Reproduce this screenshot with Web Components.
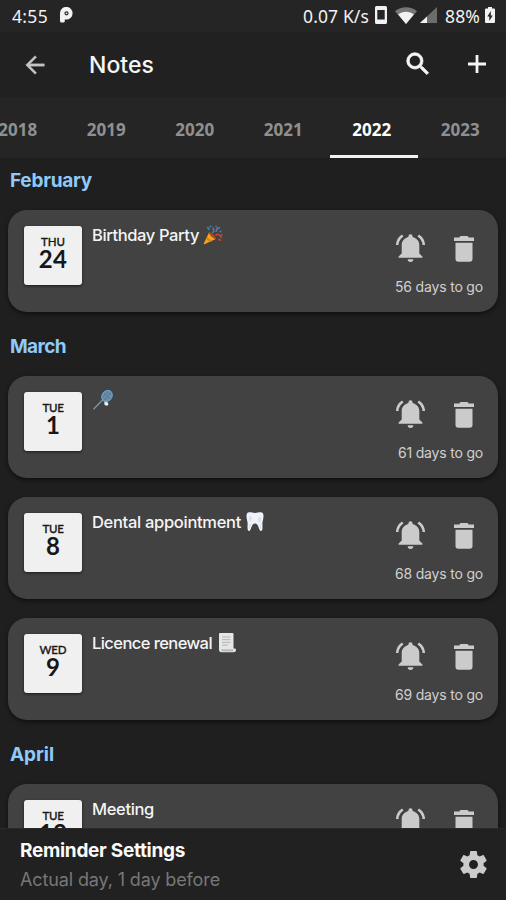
<!DOCTYPE html>
<html lang="en"><head><meta charset="utf-8"><title>Notes</title>
<style>html,body{margin:0;background:#212121;height:900px;overflow:hidden}</style></head>
<body><notes-app></notes-app>
<script>
const icons = {
 back:['0 0 24 24','<path d="M20 11H7.83l5.59-5.59L12 4l-8 8 8 8 1.41-1.41L7.83 13H20v-2z" stroke="currentColor" stroke-width=".3"/>'],
 search:['0 0 24 24','<path stroke="currentColor" stroke-width=".6" d="M15.5 14h-.79l-.28-.27A6.47 6.47 0 0 0 16 9.5 6.5 6.5 0 1 0 9.5 16c1.61 0 3.09-.59 4.23-1.57l.27.28v.79l5 4.99L20.49 19l-4.99-5zm-6 0a4.5 4.5 0 1 1 0-9 4.5 4.5 0 0 1 0 9z"/>'],
 plus:['0 0 18 18','<path d="M7.6 0h2.8v7.6H18v2.8h-7.6V18H7.6v-7.6H0V7.6h7.6z"/>'],
 bell:['0 0 28 28','<path d="M14 .2a2 2 0 0 0-2 2v.7C8 3.9 5.500 7 5.500 11v8.500L2.500 22.400v1.300h23v-1.300l-3-2.900V11c0-4-2.500-7.100-6.500-8.100v-.7a2 2 0 0 0-2-2zM11.300 25.200a2.700 2.700 0 0 0 5.400 0z"/><path fill="none" stroke="currentColor" stroke-width="2.500" d="M6.500 1.600C3.200 4 1.300 7 1.200 11M21.500 1.600c3.300 2.400 5.200 5.400 5.300 9.400"/>'],
 trash:['0 0 20 26','<path d="M6.500 0h7l1.300 1.600H20v3.500H0V1.600h5.200zM1.500 6.700h17V23a2.700 2.700 0 0 1-2.700 2.700H4.200A2.700 2.700 0 0 1 1.500 23z"/>'],
 gear:['2 2 20 20','<path d="M19.430 12.980c.04-.32.07-.64.07-.98s-.03-.66-.07-.98l2.110-1.650c.19-.15.24-.42.12-.64l-2-3.460c-.12-.22-.39-.3-.61-.22l-2.490 1c-.52-.4-1.080-.73-1.690-.98l-.38-2.650C14.460 2.180 14.250 2 14 2h-4c-.25 0-.46.18-.49.42l-.38 2.650c-.61.25-1.170.59-1.690.98l-2.490-1c-.23-.09-.49 0-.61.22l-2 3.460c-.13.22-.07.49.12.64l2.110 1.650c-.04.32-.07.65-.07.98s.03.66.07.98l-2.110 1.650c-.19.15-.24.42-.12.64l2 3.460c.12.22.39.3.61.22l2.490-1c.52.4 1.080.73 1.690.98l.38 2.650c.03.24.24.42.49.42h4c.25 0 .46-.18.49-.42l.38-2.650c.61-.25 1.170-.59 1.690-.98l2.490 1c.23.09.49 0 .61-.22l2-3.460c.12-.22.07-.49-.12-.64zM12 15.300a3.300 3.300 0 1 1 0-6.600 3.300 3.300 0 0 1 0 6.600z"/>'],
 parking:['0 0 13 16','<path fill-rule="evenodd" d="M0 6.300A6.300 6.300 0 1 1 6.300 12.500H4.800V14a1.500 1.500 0 0 1-1.500 1.500H1.500A1.500 1.500 0 0 1 0 14zM6.500 4.200a2.100 2.100 0 1 0 0 4.200 2.100 2.100 0 0 0 0-4.200z"/><circle cx="6.500" cy="6.300" r=".9"/>'],
 phone:['0 0 12 18','<path fill-rule="evenodd" d="M1.500 0h9Q12 0 12 1.500v15q0 1.500-1.500 1.500h-9Q0 18 0 16.500v-15Q0 0 1.500 0zM2.300 3.900v9.700h7.400V3.900z"/>'],
 wifi:['0 0 22 17','<path opacity=".4" d="M0 4.200C6-1.100 16-1.100 22 4.200L11 17z"/><path d="M3.200 7.500C7.500 3.900 14.500 3.900 18.800 7.500L11 17z"/>'],
 signal:['0 0 17 16','<path opacity=".35" d="M17 0v16H0z"/><path d="M7 9.400V16H0z"/>'],
 battery:['0 0 10 16','<path fill-rule="evenodd" d="M3 0h4v1.500h2q1 0 1 1V15q0 1-1 1H1q-1 0-1-1V2.500q0-1 1-1h2zM5.800 4L2.300 9.500h2V14l3.400-5.600H5.800z"/>'],
 party:['0 0 20 20','<path fill="#f9a51b" d="M6 7.500L.8 18.600q-.3 1 .7.700L12.800 14z"/><path fill="#d98218" d="M4 12l5 4-2 1-4-3z"/><path fill="#b7471d" d="M6 7.500c1-1 7.500 4.200 6.900 6.500-1.500.8-7.500-4.500-6.900-6.500z"/><g fill="none" stroke-width="1.500"><path stroke="#3d87bd" d="M9.500 8q2.500-3 .2-5.500M4 2.500q2 .2 2 2.500M13 7q.2-3.500 4-4.500"/><path stroke="#d44434" d="M12.500 10.500q2-2 3.500-.5t3.500-.8M13.500 4.500l1-2.500M15 14.500l3 .8"/></g><g fill="#3d87bd"><circle cx="7.500" cy="1.500" r="1"/><circle cx="17.500" cy="6.500" r="1"/><circle cx="13" cy="1.200" r=".8"/></g><circle cx="18" cy="12" r="1" fill="#d44434"/>'],
 racket:['0 0 20 20','<path stroke="#7898aa" stroke-width="1.300" d="M.5 19.300L9.500 10"/><ellipse cx="14" cy="6" rx="4.800" ry="5.800" transform="rotate(38 14 6)" fill="#587f9c" stroke="#5fa6cf" stroke-width="1.300"/><path stroke="#9b9fa9" stroke-width=".5" d="M10 5l6 5M12 2l6 5M10 9l6-7M13 11l5-6"/><path fill="#e9eef0" d="M11.500 11.500l3.500 1 .3 2.500q-2 1.500-4-.5z"/>'],
 tooth:['0 0 18 20','<path fill="#f0f2fb" d="M1 1.500C3-.8 5.500 1 9 1s6-1.800 8 .5c1.400 2.500-.4 7-.6 9.500-.1 3 .8 8-1.500 8-2.200 0-2-7.500-5.900-7.500S5.300 19 3.100 19C.8 19 1.700 14 1.600 11 1.400 8.500-.4 4 1 1.500z"/><path fill="#d9ddf1" d="M3 5q2-2 3 1l-1 4q-2-1-2-5zM12 6q2-2 3 0l-1 5q-2-1-2-5zM3 12l2 0-2 6zM13 12l2 1 0 5z"/>'],
 scroll:['0 0 18 20','<path fill="#e5e6e7" d="M1 1q0-1 1-1h12.500q1 0 1 1v14.500H17q1 0 1 1.500 0 2.200-2.500 2.200H3.500Q1 19.200 1 16.500z"/><path fill="#b9bbbd" d="M3 16.200h12.500q-1 1.200.5 2.300H4.500Q3 18 3 16.200z"/><path stroke="#b0b2b5" stroke-width="1" d="M4 4h8.500M4 6.700h8.500M4 9.400h8.500M4 12.100h6"/>']
};
const define = (name, html, after) => {
 const t = document.createElement('template');
 customElements.define(name, class extends HTMLElement {
  connectedCallback(){
   if (this.shadowRoot) return;
   t.innerHTML = typeof html === 'function' ? html(this) : html;
   this.attachShadow({mode:'open'}).append(t.content.cloneNode(true));
   if (after) after(this);
  }
 });
};
define('x-icon', e => {
 const [box, body] = icons[e.getAttribute('name')];
 return `<style>:host{display:block;flex:none}svg{display:block;fill:currentColor}</style><svg width="${e.getAttribute('w')}" height="${e.getAttribute('h')}" viewBox="${box}" preserveAspectRatio="none">${body}</svg>`;
});
/* Text tracked so that the run takes exactly the width given by "w". */
define('fit-text', '<style>:host{display:block;flex:none;white-space:nowrap}span{display:inline-block}</style><span><slot></slot></span>', e => {
 const s = e.shadowRoot.querySelector('span'), w = +e.getAttribute('w');
 e.style.width = w + 'px';
 s.style.letterSpacing = (w - s.getBoundingClientRect().width) / e.textContent.length + 'px';
});
define('status-bar', `<style>:host{display:flex;height:32px;align-items:center;padding:0 11px 0 12px;background:#252525;color:#f2f2f2;font:17.500px/32px "Noto Sans",sans-serif;flex:none}
 .sp{flex:1}x-icon{margin-top:-2px}</style>
 <fit-text w="36">4:55</fit-text><x-icon name="parking" w="13" h="16" style="margin-left:12px"></x-icon><div class="sp"></div>
 <fit-text w="66">0.07 K/s</fit-text><x-icon name="phone" w="12" h="18" style="margin-left:6px"></x-icon><x-icon name="wifi" w="22" h="17" style="margin-left:8px"></x-icon><x-icon name="signal" w="17" h="16" style="margin-left:3px"></x-icon><fit-text w="35" style="margin-left:8px">88%</fit-text><x-icon name="battery" w="10" h="16" style="margin-left:5px"></x-icon>`);
define('app-bar', `<style>:host{display:flex;height:65px;align-items:center;background:#212121;color:#f5f5f5;flex:none;padding:0 20px 0 21px;box-sizing:border-box;font:500 23px/65px Inter,sans-serif}
 .sp{flex:1}</style><x-icon name="back" w="28" h="28" style="color:#c4c4c4"></x-icon><fit-text w="65" style="margin:2px 0 0 40px">Notes</fit-text><div class="sp"></div><x-icon name="search" w="30" h="30" style="margin:-1px 35px 0 0"></x-icon><x-icon name="plus" w="18" h="18" style="margin-top:-1px"></x-icon>`);
define('year-tab', `<style>:host{display:flex;flex:none;width:88.500px;height:61px;justify-content:center;color:#909090;box-sizing:border-box;border-bottom:3px solid transparent;padding-top:3px}
 :host([active]){color:#fff;border-color:#f2f2f2}</style><fit-text w="43"><slot></slot></fit-text>`);
define('year-tabs', `<style>:host{display:flex;height:61px;background:#252525;flex:none;overflow:hidden;font:700 17px/59px "Noto Sans",sans-serif}
 year-tab:first-of-type{margin-left:-24.500px}</style>${[2018,2019,2020,2021,2022,2023].map(y=>`<year-tab${y===2022?' active':''}>${y}</year-tab>`).join('')}`);
define('month-title', `<style>:host{display:block;color:#90caf9;font:700 19px/30px Inter,sans-serif;padding-left:10px;margin:20.500px 0 14px}</style><slot></slot>`);
define('date-tile', e => `<style>:host{display:flex;flex-direction:column;align-items:center;box-sizing:border-box;width:58px;height:58.500px;background:#f0f0f0;border-radius:3px;color:#171717;box-shadow:0 1px 3px #0009;padding-top:9px;flex:none}
 .d{font:500 11.500px/14px Lato,sans-serif;-webkit-text-stroke:.3px}.n{font:700 24px/20px Lato,sans-serif;letter-spacing:.3px}</style><fit-text class="d" w="${e.getAttribute('w')}">${e.getAttribute('day')}</fit-text><div class="n">${e.getAttribute('num')}</div>`);
define('note-card', e => `<style>:host{display:flex;box-sizing:border-box;height:101.500px;margin:0 8px 19.500px;border-radius:19px;background:#424242;box-shadow:0 2px 4px #0008;padding:16px 15px 0 16px;color:#f5f5f5;font:500 16.500px/21px Inter,sans-serif}
 :host([last]){margin-bottom:0}
 .t{display:flex;margin:-1px 0 0 10px;flex:1;align-items:flex-start;height:21px}.r{display:flex;flex-direction:column;align-items:flex-end;padding-top:7.500px}
 .i{display:flex;gap:29px;color:#cbcbcb;padding-right:9px}.g{font:400 14px/20px Inter,sans-serif;color:#d0d0d0;margin-top:15.500px}</style>
 <date-tile day="${e.getAttribute('day')}" num="${e.getAttribute('num')}" w="${e.getAttribute('dw')}"></date-tile>
 <div class="t"><slot></slot></div><div class="r"><div class="i"><x-icon name="bell" w="29" h="28"></x-icon><x-icon name="trash" w="20" h="26" style="margin-top:2px"></x-icon></div><fit-text class="g" w="${e.getAttribute('gw')}">${e.getAttribute('left')} days to go</fit-text></div>`);
define('reminder-bar', `<style>:host{display:flex;box-sizing:border-box;height:72px;background:#212121;flex:none;border-top:1px solid #292929;justify-content:space-between;padding:9px 19px 0 20px;position:relative}
 .a{font:700 19px/26px Inter,sans-serif;color:#fafafa}.b{font:400 18px/26px Inter,sans-serif;color:#777;margin-top:3px}x-icon{color:#cbcbcb;margin-top:12.500px}</style>
 <div><fit-text class="a" w="165">Reminder Settings</fit-text><fit-text class="b" w="200">Actual day, 1 day before</fit-text></div><x-icon name="gear" w="27" h="27"></x-icon>`);
define('notes-app', `<style>:host{display:flex;flex-direction:column;width:506px;height:900px;overflow:hidden;background:#1f1f1f}
 main{flex:1;min-height:0;overflow:hidden;display:flow-root}month-title:first-child{margin-top:8px}</style>
 <status-bar></status-bar><app-bar></app-bar><year-tabs></year-tabs><main>
 <month-title><fit-text w="82">February</fit-text></month-title>
 <note-card last day="THU" num="24" dw="24" left="56" gw="88"><fit-text w="107">Birthday Party</fit-text><x-icon name="party" w="20" h="20" style="margin-left:4px"></x-icon></note-card>
 <month-title><fit-text w="56">March</fit-text></month-title>
 <note-card day="TUE" num="1" dw="21" left="61" gw="85"><x-icon name="racket" w="20" h="20" style="margin:-1px 0 0 1px"></x-icon></note-card>
 <note-card day="TUE" num="8" dw="21" left="68" gw="88"><fit-text w="149">Dental appointment</fit-text><x-icon name="tooth" w="18" h="20" style="margin-left:5px"></x-icon></note-card>
 <note-card last day="WED" num="9" dw="27" left="69" gw="88"><fit-text w="120">Licence renewal</fit-text><x-icon name="scroll" w="18" h="20" style="margin-left:6px"></x-icon></note-card>
 <month-title><fit-text w="44">April</fit-text></month-title>
 <note-card day="TUE" num="12" dw="21" left="103" gw="94"><fit-text w="62">Meeting</fit-text></note-card>
 </main><reminder-bar></reminder-bar>`);
</script></body></html>
